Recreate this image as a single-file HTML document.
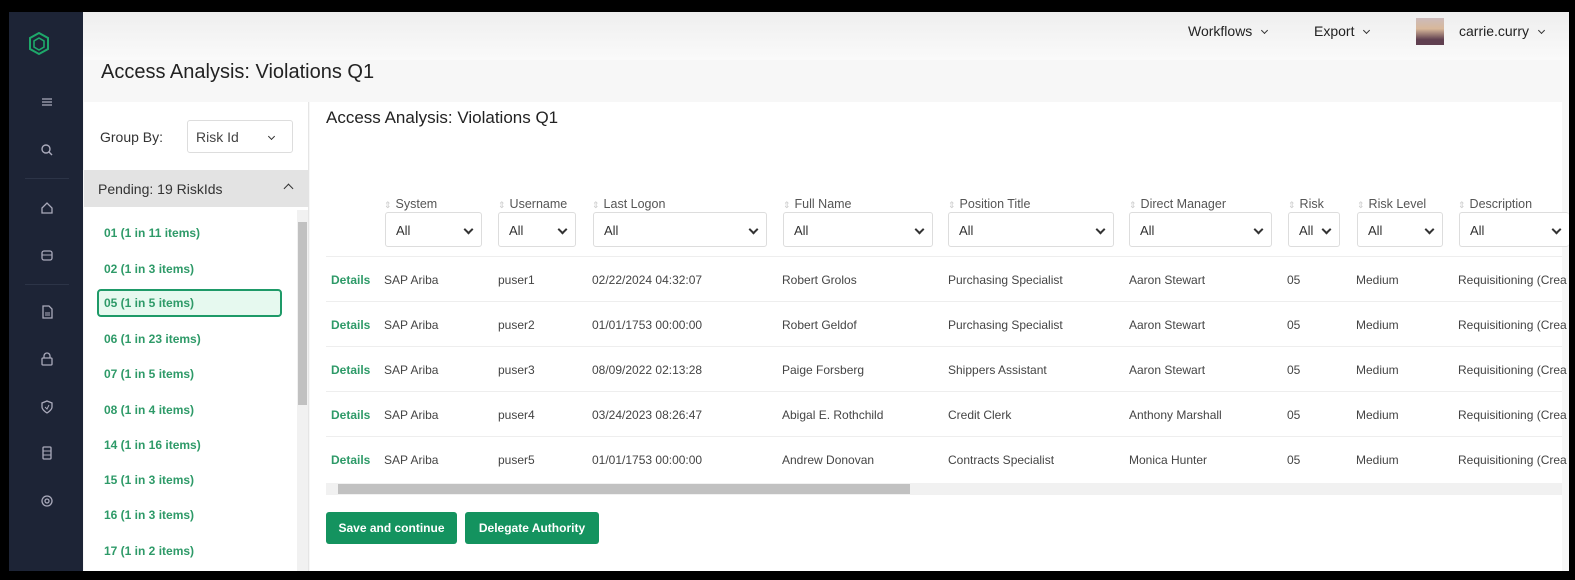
<!DOCTYPE html>
<html><head><style>
*{box-sizing:border-box;margin:0;padding:0}
body{width:1575px;height:580px;background:#000;position:relative;overflow:hidden;font-family:"Liberation Sans",sans-serif;color:#333}
.a{position:absolute}
#side{left:9px;top:12px;width:74px;height:559px;background:#1d2436}
#main{left:83px;top:12px;width:1486px;height:559px;background:#f7f7f7}
.ic{position:absolute;left:31px;width:14px;height:14px}
.sep{position:absolute;left:16px;width:44px;height:1px;background:#2c3447}
.g{color:#2e9a68;font-size:12px;font-weight:bold;position:absolute;left:104px}
.th{position:absolute;top:197px;font-size:12.5px;color:#555}
.th:before{content:"\21D5";color:#ccc;font-size:9px;margin-right:4px}
.sel{position:absolute;top:212px;height:35px;border:1px solid #ddd;border-radius:3px;background:#fff;font-size:13px;padding:10px 0 0 10px;color:#333}
.sel:after{content:"";position:absolute;right:9px;top:13px;width:5px;height:5px;border-right:2px solid #333;border-bottom:2px solid #333;transform:rotate(45deg)}
.row{position:absolute;left:326px;width:1236px;height:45px;border-top:1px solid #eee;font-size:12px;color:#444}
.row span{position:absolute;top:16px;white-space:nowrap}
.btn{position:absolute;top:512px;height:32px;background:#14935f;color:#fff;font-size:12px;font-weight:bold;border-radius:3px;text-align:center;line-height:32px}
.chev{display:inline-block;width:5px;height:5px;border-right:1.5px solid #333;border-bottom:1.5px solid #333;transform:rotate(45deg);margin-left:10px;position:relative;top:-3px}
</style></head><body>
<div class="a" id="side">
<svg class="a" style="left:19px;top:20px" width="22" height="24" viewBox="0 0 22 24"><path d="M11 1L20 6V17L11 22L2 17V6Z" fill="none" stroke="#1ea86a" stroke-width="2"/><path d="M11 6L16 9V15L11 18L6 15V9Z" fill="none" stroke="#1ea86a" stroke-width="1.6"/></svg>
<svg class="ic" style="top:83px" viewBox="0 0 14 14"><path d="M2 4H12M2 7H12M2 10H12" stroke="#aab" stroke-width="1.3"/></svg>
<svg class="ic" style="top:131px" viewBox="0 0 14 14"><circle cx="6" cy="6" r="4" fill="none" stroke="#aab" stroke-width="1.4"/><path d="M9 9L12 12" stroke="#aab" stroke-width="1.4"/></svg>
<div class="sep" style="top:166px"></div>
<svg class="ic" style="top:189px" viewBox="0 0 14 14"><path d="M2 7L7 2L12 7V12H2Z" fill="none" stroke="#aab" stroke-width="1.3"/></svg>
<svg class="ic" style="top:236px" viewBox="0 0 14 14"><rect x="2" y="3" width="10" height="9" rx="2" fill="none" stroke="#aab" stroke-width="1.3"/><path d="M2 7H12" stroke="#aab"/></svg>
<div class="sep" style="top:272px"></div>
<svg class="ic" style="top:293px" viewBox="0 0 14 14"><path d="M3 1H9L12 4V13H3Z" fill="none" stroke="#aab" stroke-width="1.3"/><path d="M5 8H10M5 10H10" stroke="#aab"/></svg>
<svg class="ic" style="top:340px" viewBox="0 0 14 14"><rect x="2" y="6" width="10" height="7" rx="1" fill="none" stroke="#aab" stroke-width="1.3"/><path d="M4 6V4A3 3 0 0 1 10 4V6" fill="none" stroke="#aab" stroke-width="1.3"/></svg>
<svg class="ic" style="top:388px" viewBox="0 0 14 14"><path d="M7 1L12 3V7C12 10 7 13 7 13C7 13 2 10 2 7V3Z" fill="none" stroke="#aab" stroke-width="1.3"/><path d="M5 7L7 9L9 5" fill="none" stroke="#aab"/></svg>
<svg class="ic" style="top:434px" viewBox="0 0 14 14"><rect x="3" y="1" width="8" height="12" rx="1" fill="none" stroke="#aab" stroke-width="1.3"/><path d="M3 5H11M3 9H11" stroke="#aab"/></svg>
<svg class="ic" style="top:482px" viewBox="0 0 14 14"><circle cx="7" cy="7" r="5" fill="none" stroke="#aab" stroke-width="1.3"/><circle cx="7" cy="7" r="2" fill="none" stroke="#aab" stroke-width="1.3"/></svg>
</div>
<div class="a" id="main"></div>
<div class="a" style="left:83px;top:12px;width:1486px;height:48px;background:linear-gradient(#eee,#fafafa)"></div>
<div class="a" style="left:1188px;top:23px;font-size:14px;color:#222">Workflows<span class="chev"></span></div>
<div class="a" style="left:1314px;top:23px;font-size:14px;color:#222">Export<span class="chev"></span></div>
<div class="a" style="left:1416px;top:18px;width:28px;height:27px;background:linear-gradient(#cbb 0%,#d8b89a 40%,#604050 80%)"></div>
<div class="a" style="left:1459px;top:23px;font-size:14px;color:#222">carrie.curry<span class="chev"></span></div>
<div class="a" style="left:101px;top:61px;font-size:20px;color:#222">Access Analysis: Violations Q1</div>
<div class="a" style="left:84px;top:102px;width:225px;height:469px;background:#fff;border-right:1px solid #e5e5e5"></div>
<div class="a" style="left:100px;top:129px;font-size:14px;color:#333">Group By:</div>
<div class="a" style="left:187px;top:120px;width:106px;height:33px;border:1px solid #ddd;border-radius:3px;font-size:14px;padding:8px 0 0 8px;color:#444">Risk Id<span class="chev" style="margin-left:30px"></span></div>
<div class="a" style="left:84px;top:170px;width:225px;height:37px;background:#e3e3e3;font-size:14px;padding:11px 0 0 14px;color:#333">Pending: 19 RiskIds<span class="a" style="left:201px;top:15px;width:7px;height:7px;border-left:1.5px solid #333;border-top:1.5px solid #333;transform:rotate(45deg)"></span></div>
<div class="a" style="left:297px;top:210px;width:11px;height:361px;background:#f1f1f1"></div>
<div class="a" style="left:298px;top:222px;width:9px;height:183px;background:#c1c1c1"></div>
<div class="g" style="top:226px">01 (1 in 11 items)</div>
<div class="g" style="top:262px">02 (1 in 3 items)</div>
<div class="a" style="left:97px;top:289px;width:185px;height:28px;border:2px solid #1e9a68;border-radius:4px;background:#e6f9ef"></div>
<div class="g" style="top:296px">05 (1 in 5 items)</div>
<div class="g" style="top:332px">06 (1 in 23 items)</div>
<div class="g" style="top:367px">07 (1 in 5 items)</div>
<div class="g" style="top:403px">08 (1 in 4 items)</div>
<div class="g" style="top:438px">14 (1 in 16 items)</div>
<div class="g" style="top:473px">15 (1 in 3 items)</div>
<div class="g" style="top:508px">16 (1 in 3 items)</div>
<div class="g" style="top:544px">17 (1 in 2 items)</div>
<div class="a" style="left:310px;top:102px;width:1252px;height:469px;background:#fff"></div>
<div class="a" style="left:326px;top:108px;font-size:17px;color:#222">Access Analysis: Violations Q1</div>
<div class="th" style="left:384px">System</div><div class="sel" style="left:385px;width:97px">All</div>
<div class="th" style="left:498px">Username</div><div class="sel" style="left:498px;width:78px">All</div>
<div class="th" style="left:592px">Last Logon</div><div class="sel" style="left:593px;width:174px">All</div>
<div class="th" style="left:783px">Full Name</div><div class="sel" style="left:783px;width:150px">All</div>
<div class="th" style="left:948px">Position Title</div><div class="sel" style="left:948px;width:166px">All</div>
<div class="th" style="left:1129px">Direct Manager</div><div class="sel" style="left:1129px;width:143px">All</div>
<div class="th" style="left:1288px">Risk</div><div class="sel" style="left:1288px;width:52px">All</div>
<div class="th" style="left:1357px">Risk Level</div><div class="sel" style="left:1357px;width:86px">All</div>
<div class="th" style="left:1458px">Description</div><div class="sel" style="left:1459px;width:110px;border-right:none">All</div>
<div class="row" style="top:256px"><span style="left:5px;color:#2e9a68;font-weight:bold">Details</span><span style="left:58px">SAP Ariba</span><span style="left:172px">puser1</span><span style="left:266px">02/22/2024 04:32:07</span><span style="left:456px">Robert Grolos</span><span style="left:622px">Purchasing Specialist</span><span style="left:803px">Aaron Stewart</span><span style="left:961px">05</span><span style="left:1030px">Medium</span><span style="left:1132px">Requisitioning (Crea</span></div>
<div class="row" style="top:301px"><span style="left:5px;color:#2e9a68;font-weight:bold">Details</span><span style="left:58px">SAP Ariba</span><span style="left:172px">puser2</span><span style="left:266px">01/01/1753 00:00:00</span><span style="left:456px">Robert Geldof</span><span style="left:622px">Purchasing Specialist</span><span style="left:803px">Aaron Stewart</span><span style="left:961px">05</span><span style="left:1030px">Medium</span><span style="left:1132px">Requisitioning (Crea</span></div>
<div class="row" style="top:346px"><span style="left:5px;color:#2e9a68;font-weight:bold">Details</span><span style="left:58px">SAP Ariba</span><span style="left:172px">puser3</span><span style="left:266px">08/09/2022 02:13:28</span><span style="left:456px">Paige Forsberg</span><span style="left:622px">Shippers Assistant</span><span style="left:803px">Aaron Stewart</span><span style="left:961px">05</span><span style="left:1030px">Medium</span><span style="left:1132px">Requisitioning (Crea</span></div>
<div class="row" style="top:391px"><span style="left:5px;color:#2e9a68;font-weight:bold">Details</span><span style="left:58px">SAP Ariba</span><span style="left:172px">puser4</span><span style="left:266px">03/24/2023 08:26:47</span><span style="left:456px">Abigal E. Rothchild</span><span style="left:622px">Credit Clerk</span><span style="left:803px">Anthony Marshall</span><span style="left:961px">05</span><span style="left:1030px">Medium</span><span style="left:1132px">Requisitioning (Crea</span></div>
<div class="row" style="top:436px"><span style="left:5px;color:#2e9a68;font-weight:bold">Details</span><span style="left:58px">SAP Ariba</span><span style="left:172px">puser5</span><span style="left:266px">01/01/1753 00:00:00</span><span style="left:456px">Andrew Donovan</span><span style="left:622px">Contracts Specialist</span><span style="left:803px">Monica Hunter</span><span style="left:961px">05</span><span style="left:1030px">Medium</span><span style="left:1132px">Requisitioning (Crea</span></div>
<div class="a" style="left:326px;top:483px;width:1236px;height:12px;background:#f1f1f1"></div>
<div class="a" style="left:338px;top:484px;width:572px;height:10px;background:#c1c1c1"></div>
<div class="btn" style="left:326px;width:131px">Save and continue</div>
<div class="btn" style="left:465px;width:134px">Delegate Authority</div>
</body></html>
